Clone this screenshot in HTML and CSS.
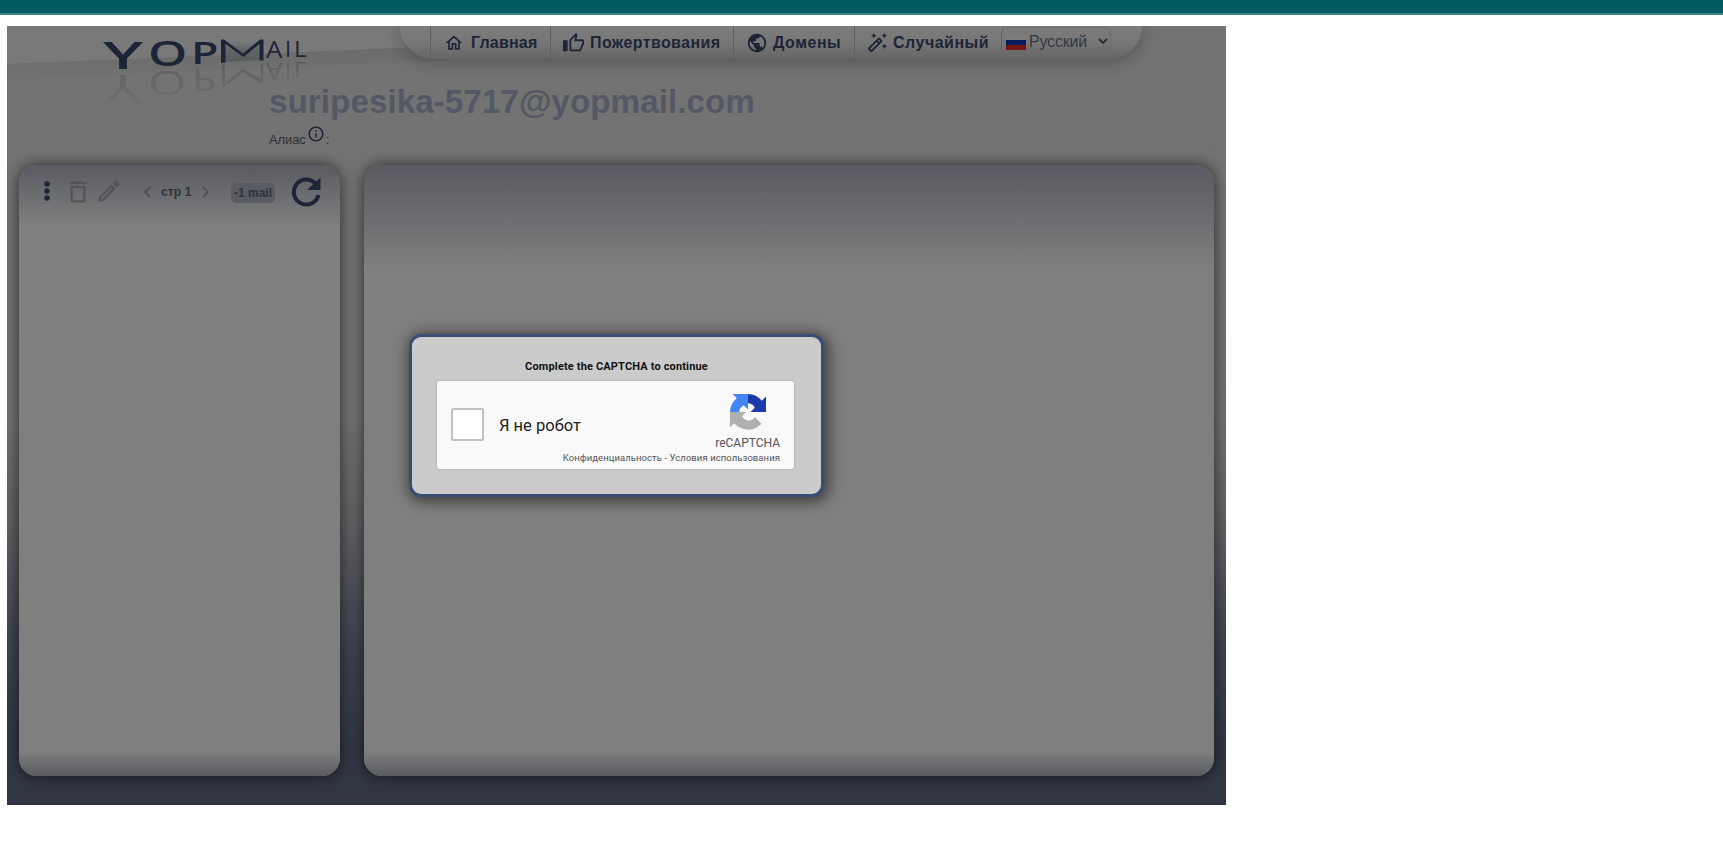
FILE: index.html
```
<!DOCTYPE html>
<html lang="ru">
<head>
<meta charset="utf-8">
<title>YOPmail</title>
<link rel="stylesheet" href="styles.css">
</head>
<body>
<div class="topbar"></div>
<main class="app">
  <svg class="slope" width="440" height="60" viewBox="0 0 440 60">
    <defs><linearGradient id="under" x1="0" y1="0" x2="0" y2="1"><stop offset="0" stop-color="#6b6b6b"/><stop offset="1" stop-color="#727272"/></linearGradient></defs>
    <path d="M0 0H440V20L393 22 0 38Z" fill="#797979"/>
    <path d="M0 38L393 22 440 20V34L0 54Z" fill="url(#under)"/>
  </svg>
  <header class="header">
    <svg class="logo" width="215" height="85" viewBox="0 0 215 85">
      <defs>
        <linearGradient id="env" x1="0" y1="0" x2="0" y2="1"><stop offset="0" stop-color="#7c7e7e"/><stop offset=".5" stop-color="#606464"/><stop offset="1" stop-color="#585c5c"/></linearGradient>
        <linearGradient id="fade" x1="0" y1="0" x2="0" y2="1"><stop offset="0" stop-color="#fff" stop-opacity=".24"/><stop offset="1" stop-color="#fff" stop-opacity=".02"/></linearGradient>
        <mask id="m" maskUnits="userSpaceOnUse" x="0" y="36" width="215" height="48"><rect x="0" y="36" width="215" height="44" fill="url(#fade)"/></mask>
      </defs>
      <g class="logo-ink" mask="url(#m)">
        <text class="logo-thin" transform="translate(3 49) scale(1.780 -1)" font-size="40">Y</text>
        <text class="logo-thin" transform="translate(48 45) scale(1.500 -1)" font-size="33">O</text>
        <text class="logo-thin" transform="translate(92 43) scale(1.300 -1)" font-size="31">P</text>
        <path d="M122 39V61H124L143 46 160 57H163V37H161V53L143 43 125 57V38Z"/>
        <text class="logo-thin" transform="translate(166 37) scale(1.080 -1)" font-size="24">A</text>
        <text class="logo-thin" transform="translate(185 36.500) scale(1 -1)" font-size="22">I</text>
        <text class="logo-thin" transform="translate(194 36) scale(1.150 -1)" font-size="21">L</text>
      </g>
      <g class="logo-ink">
        <text class="logo-bold" transform="translate(3 43) scale(1.780 1)" font-size="38">Y</text>
        <text class="logo-bold" transform="translate(48 39.500) scale(1.470 1)" font-size="34">O</text>
        <text class="logo-bold" transform="translate(91 37.500) scale(1.420 1)" font-size="31.500">P</text>
        <path d="M122 13.500H162L163 34 122 36Z" fill="url(#env)"/>
        <path d="M121 37V13.500H124L143 27.500 160 13.500H163.500V34.500H159.500V18L143.500 31 125.500 18V36.500Z"/>
        <text class="logo-thin" transform="translate(166 32) scale(1.080 1)" font-size="24">A</text>
        <text class="logo-thin" transform="translate(185 31)" font-size="22">I</text>
        <text class="logo-thin" transform="translate(194 30.500) scale(1.150 1)" font-size="21">L</text>
      </g>
    </svg>
    <nav class="nav">
      <a class="item home"><svg width="20" height="20" viewBox="0 0 24 24"><path d="M12 3 2 12h3v8h6v-6h2v6h6v-8h3L12 3zm5 15h-2v-6H9v6H7v-7.810l5-4.500 5 4.500V18z"/></svg><span>Главная</span></a>
      <a class="item donate"><svg width="22" height="22" viewBox="0 0 24 24"><path d="M9 21h9c.83 0 1.540-.5 1.840-1.220l3.020-7.050c.09-.23.14-.47.14-.73v-2c0-1.100-.9-2-2-2h-6.310l.95-4.570.03-.32c0-.41-.17-.79-.44-1.060L14.170 1 7.580 7.590C7.220 7.950 7 8.450 7 9v10c0 1.100.9 2 2 2zM9 9l4.340-4.340L12 10h9v2l-3 7H9V9zM0 9h5v12H0z"/></svg><span>Пожертвования</span></a>
      <a class="item domains"><svg width="22" height="22" viewBox="0 0 24 24"><path d="M12 2C6.480 2 2 6.480 2 12s4.480 10 10 10 10-4.480 10-10S17.520 2 12 2zm-1 17.930c-3.950-.49-7-3.850-7-7.930 0-.62.08-1.210.21-1.790L9 15v1c0 1.100.9 2 2 2v1.930zm6.900-2.540c-.26-.81-1-1.390-1.900-1.390h-1v-3c0-.55-.45-1-1-1H8v-2h2c.55 0 1-.45 1-1V7h2c1.100 0 2-.9 2-2v-.41c2.930 1.190 5 4.060 5 7.410 0 2.080-.8 3.970-2.100 5.390z"/></svg><span>Домены</span></a>
      <a class="item random"><svg width="22" height="22" viewBox="0 0 24 24"><path d="M20 7l.94-2.060L23 4l-2.060-.94L20 1l-.94 2.060L17 4l2.060.94zM8.500 7l.94-2.060L11.500 4l-2.060-.94L8.500 1l-.94 2.060L5.500 4l2.060.94zM20 12.500l-.94 2.060-2.060.94 2.060.94.94 2.060.94-2.060L23 15.500l-2.060-.94zM17.710 9.120l-2.830-2.830C14.680 6.100 14.430 6 14.170 6c-.26 0-.51.1-.71.290L2.290 17.460c-.39.39-.39 1.020 0 1.410l2.830 2.830c.2.200.45.300.71.300s.51-.1.710-.29l11.170-11.170c.39-.39.39-1.030 0-1.420zm-3.540-.7 1.410 1.410L14.410 11 13 9.590l1.170-1.170zM5.830 19.590l-1.410-1.410L11.590 11 13 12.410l-7.170 7.180z"/></svg><span>Случайный</span></a>
      <div class="lang"><i class="flag"></i><span>Русский</span><svg width="10" height="7" viewBox="0 0 10 7"><path d="M1 1l4 4 4-4" fill="none" stroke="#262a36" stroke-width="1.800"/></svg></div>
    </nav>
  </header>
  <section class="mailbox">
    <h1 class="address">suripesika-5717@yopmail.com</h1>
    <div class="alias"><span>Алиас</span><svg width="18" height="18" viewBox="0 0 24 24"><path d="M11 7h2v2h-2zm0 4h2v6h-2zm1-9C6.480 2 2 6.480 2 12s4.480 10 10 10 10-4.480 10-10S17.520 2 12 2zm0 18c-4.410 0-8-3.590-8-8s3.590-8 8-8 8 3.590 8 8-3.590 8-8 8z"/></svg><span>:</span></div>
  </section>
  <section class="panels">
    <aside class="panel inbox">
      <div class="toolbar">
        <svg class="dots" width="6" height="20" viewBox="0 0 6 20"><circle cx="3" cy="3" r="2.700"/><circle cx="3" cy="10" r="2.700"/><circle cx="3" cy="17" r="2.700"/></svg>
        <svg class="trash muted" width="18" height="22" viewBox="0 0 18 22"><path fill-rule="evenodd" d="M1.500 5H16.500V19.500q0 2-2 2H3.500q-2 0-2-2zM3.700 7V19.300H14.300V7zM5.500 1V0H12.500V1H17.500V3H.5V1z"/></svg>
        <svg class="pencil muted" width="28" height="28" viewBox="0 0 24 24"><path d="M14.060 9.020l.92.92L5.920 19H5v-.92l9.060-9.060M17.660 3c-.25 0-.51.1-.7.290l-1.830 1.830 3.750 3.750 1.830-1.830c.39-.39.39-1.020 0-1.410l-2.340-2.340c-.2-.2-.45-.29-.71-.29zm-3.600 3.190L3 17.250V21h3.750L17.810 9.940l-3.750-3.750z"/></svg>
        <svg class="prev" width="8" height="12" viewBox="0 0 8 12"><path d="M7 1L2 6l5 5"/></svg>
        <span class="page">стр 1</span>
        <svg class="next" width="8" height="12" viewBox="0 0 8 12"><path d="M1 1l5 5-5 5"/></svg>
        <span class="count">-1 mail</span>
        <svg class="refresh" width="32" height="32" viewBox="0 0 32 32"><path d="M28.500 19A12.500 12.500 0 1 1 25 7" fill="none" stroke="#1d2436" stroke-width="4"/><path d="M30.500 1.500V14H17Z"/></svg>
      </div>
      <div class="foot"></div>
    </aside>
    <article class="panel reader"><div class="reader-head"></div><div class="foot"></div></article>
  </section>
  <div class="dialog">
    <p class="dialog-title">Complete the CAPTCHA to continue</p>
    <div class="captcha">
      <span class="box"></span>
      <span class="captcha-label">Я не робот</span>
      <div class="brand">
        <svg width="36" height="36" viewBox="0 0 64 64">
          <path d="M64 31.950V4.600l-7.500 7.500A32 32 0 0 0 32 .05V16.500c3 0 10 2 12 8L36.500 32z" fill="#1c3aa9"/>
          <path d="M32 .05H4.700l7.500 7.500A32 32 0 0 0 0 32H16.500c0-4 1-8 8-12L32 27.500z" fill="#4285f4"/>
          <path d="M0 32v27.300l7.500-7.500A32 32 0 0 0 56 52.700L44.500 41c-5 8-17 9-23-1L28 32z" fill="#b0b0b0"/>
        </svg>
        <span class="brand-name">reCAPTCHA</span>
        <span class="legal">Конфиденциальность - Условия использования</span>
      </div>
    </div>
  </div>
</main>
</body>
</html>
```
FILE: styles.css
```
* { box-sizing: border-box; }
body { margin: 0; height: 855px; background: #fff; overflow: hidden; font-family: "Liberation Sans", Arial, sans-serif; }
svg { display: block; flex: none; fill: #1d2436; }
.topbar { height: 15px; background: #045a61; border-bottom: 2px solid #3f8086; }
.app {
  position: relative; width: 1219px; height: 779px; margin: 11px 0 0 7px; overflow: hidden;
  display: flex; flex-direction: column;
  background: linear-gradient(#737373 0, #727272 390px, #5f6063 500px, #414550 610px, #343947 700px, #303541 779px);
}
.slope { position: absolute; left: 0; top: 0; }

.header { position: relative; display: flex; height: 34px; padding-left: 93px; flex: none; }
.logo { margin-right: 85px; overflow: visible; }
.logo-ink { fill: #1d2436; font-family: "Open Sans", sans-serif; }
.logo-bold { font-weight: 600; }
.logo-thin { font-weight: 500; }

.nav {
  display: flex; width: 742px; height: 33px; padding-left: 30px;
  border-radius: 0 0 34px 34px; background: linear-gradient(#7c7c7c 0, #777 50%, #656565 100%);
  box-shadow: 0 2px 18px rgba(0,0,0,.3);
}
.item {
  display: flex; align-items: center; gap: 8px; height: 33px;
  border-left: 1px solid #606060; color: #1d2436; font-size: 16px; font-weight: 700; white-space: nowrap;
}
.home { width: 120px; padding-left: 13px; gap: 7px; letter-spacing: .2px; }
.donate { width: 183px; padding-left: 12px; gap: 5px; letter-spacing: .4px; }
.domains { width: 121px; padding-left: 12px; gap: 5px; letter-spacing: .5px; }
.random { width: 147px; padding-left: 11px; gap: 5px; letter-spacing: .5px; }
.lang {
  display: flex; align-items: center; width: 110px; height: 29px; margin-top: 1px; padding-left: 4px;
  border: 1px solid #6e6e6e; border-left-color: #606060; border-radius: 6px; color: #333844; font-size: 16px;
}
.lang span { padding-top: 1px; letter-spacing: -.2px; }
.flag { width: 20px; height: 14px; margin: 2px 3px 0 0; background: linear-gradient(#7c7c7c 0 28%, #001c5e 28% 64%, #74150f 64%); }
.lang svg { margin-left: 11px; margin-top: -1px; }

.mailbox { height: 105px; padding: 23px 0 0 262px; flex: none; position: relative; }
.address { margin: 0; font-size: 33.300px; line-height: 38px; color: #545864; }
.alias { display: flex; align-items: flex-end; height: 26px; font-size: 13px; line-height: 15px; letter-spacing: -.1px; color: #303030; }
.alias svg { margin: 0 1px 4px 1px; }

.panels { display: flex; gap: 24px; padding: 0 12px; height: 611px; flex: none; }
.panel {
  display: flex; flex-direction: column; justify-content: space-between; overflow: hidden;
  border-radius: 18px; background: #7f7f7f; box-shadow: 0 0 14px 1px rgba(0,0,0,.55);
}
.inbox { width: 321px; }
.reader { width: 850px; }
.toolbar {
  display: flex; align-items: flex-start; height: 58px; padding: 12px 0 0 25px;
  background: linear-gradient(#595b62, #7e7e7e);
  color: #303136; font-weight: 700;
}
.dots { margin-top: 4px; }
.trash { margin: 4px 0 0 19px; }
.muted { fill: #545455; }
.pencil { margin: 0 0 0 8px; }
.prev, .next { fill: none; stroke: #4f5054; stroke-width: 1.800; margin-top: 9px; }
.prev { margin-left: 20px; }
.page { margin: 7px 0 0 10px; width: 41px; font-size: 12.300px; line-height: 16px; white-space: nowrap; }
.count {
  width: 44px; height: 20px; margin: 6px 15px 0 21px; border-radius: 5px; background: #5a5c64;
  font-size: 12px; line-height: 20px; text-align: center; white-space: nowrap;
}
.refresh { margin-top: -1px; }
.reader-head { height: 105px; background: linear-gradient(#595b62, #7f7f7f); }
.foot { height: 22px; background: linear-gradient(#7a7a7a, #595b60); }

.dialog {
  position: absolute; left: 402px; top: 308px; width: 415px; height: 163px; padding: 22px 0 0 25px;
  border: 3px solid #3a4d75; border-radius: 12px; background: #cbcbcb; box-shadow: 2px 2px 14px 3px rgba(0,0,0,.5);
}
.dialog-title { margin: 0 25px 6px 0; font: 700 11px/16px "Roboto", sans-serif; letter-spacing: .15px; text-align: center; color: #111; }
.captcha {
  position: relative; display: flex; width: 357px; height: 88px; padding-left: 14px; border-radius: 3px;
  background: #f9f9f9; box-shadow: 0 0 3px rgba(0,0,0,.2); font-family: "Roboto", sans-serif;
}
.box { width: 33px; height: 33px; margin: 27px 15px 0 0; border: 2px solid #c1c1c1; border-radius: 2px; background: #fff; }
.captcha-label { margin-top: 35px; font-size: 16.500px; line-height: 20px; color: #222; white-space: nowrap; }
.brand { display: flex; flex-direction: column; align-items: flex-end; flex: 1; padding: 13px 14px 0 0; margin-left: -40px; color: #555; }
.brand svg { margin-right: 14px; }
.brand-name { margin-top: 6px; font-size: 12px; line-height: 14px; }
.legal { margin-top: 2px; font-size: 9.500px; line-height: 11px; letter-spacing: .07px; white-space: nowrap; }
```
